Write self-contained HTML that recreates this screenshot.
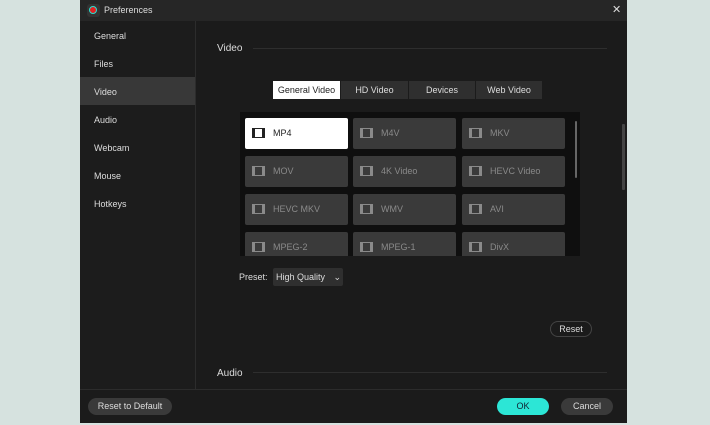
<!DOCTYPE html><html><head><style>
body{margin:0;width:710px;height:425px;background:#d6e2df;font-family:"Liberation Sans",sans-serif;font-size:9px;color:#ddd;position:relative;overflow:hidden}
.a{position:absolute}
.dlg{left:80px;top:0;width:547px;height:423px;background:#1b1b1b}
.title{left:80px;top:0;width:547px;height:21px;background:#262626}
.side{left:80px;top:21px;width:115px;height:368px;background:#1c1c1c;border-right:1px solid #2c2c2c}
.si{position:absolute;left:14px;color:#ddd}
.tab{position:absolute;top:81px;height:18px;line-height:18px;text-align:center;background:#2f2f2f;color:#ddd}
.cell{position:absolute;width:103px;height:31px;background:#3a3a3a;border-radius:2px;color:#8a8a8a;line-height:31px}
.cell span{position:absolute;left:28px}
.cell i{position:absolute;left:7px;top:10px;width:13px;height:10px;border:1.5px solid #8a8a8a;box-sizing:border-box;border-left-width:3px;border-right-width:3px}
.cell.on{background:#fff;color:#222}.cell.on i{border-color:#222}
.btn{position:absolute;border-radius:9px;text-align:center;color:#ddd}
</style></head><body>
<div class="a dlg"></div>
<div class="a title"></div>
<div class="a" style="left:87px;top:4px;width:13px;height:13px;border-radius:3px;background:#333"></div>
<div class="a" style="left:89px;top:6px;width:6px;height:6px;border-radius:50%;background:#e02020;border:1.5px solid #2ce0d0"></div>
<div class="a" style="left:104px;top:5px;color:#ddd">Preferences</div>
<div class="a" style="left:612px;top:3px;color:#ddd;font-size:11px">✕</div>
<div class="a side">
<div class="si" style="top:10px">General</div>
<div class="si" style="top:38px">Files</div>
<div class="a" style="left:0;top:56px;width:115px;height:28px;background:#383838"></div>
<div class="si" style="top:66px">Video</div>
<div class="si" style="top:94px">Audio</div>
<div class="si" style="top:122px">Webcam</div>
<div class="si" style="top:150px">Mouse</div>
<div class="si" style="top:178px">Hotkeys</div>
</div>
<div class="a" style="left:217px;top:43px;font-size:10px">Video</div>
<div class="a" style="left:253px;top:48px;width:354px;height:1px;background:#2e2e2e"></div>
<div class="tab" style="left:273px;width:67px;background:#fff;color:#222">General Video</div>
<div class="tab" style="left:341px;width:67px">HD Video</div>
<div class="tab" style="left:409px;width:66px">Devices</div>
<div class="tab" style="left:476px;width:66px">Web Video</div>
<div class="a" style="left:240px;top:112px;width:340px;height:144px;background:#0f0f0f;overflow:hidden">
<div class="cell on" style="left:5px;top:6px"><i></i><span>MP4</span></div>
<div class="cell" style="left:113px;top:6px"><i></i><span>M4V</span></div>
<div class="cell" style="left:222px;top:6px"><i></i><span>MKV</span></div>
<div class="cell" style="left:5px;top:44px"><i></i><span>MOV</span></div>
<div class="cell" style="left:113px;top:44px"><i></i><span>4K Video</span></div>
<div class="cell" style="left:222px;top:44px"><i></i><span>HEVC Video</span></div>
<div class="cell" style="left:5px;top:82px"><i></i><span>HEVC MKV</span></div>
<div class="cell" style="left:113px;top:82px"><i></i><span>WMV</span></div>
<div class="cell" style="left:222px;top:82px"><i></i><span>AVI</span></div>
<div class="cell" style="left:5px;top:120px"><i></i><span>MPEG-2</span></div>
<div class="cell" style="left:113px;top:120px"><i></i><span>MPEG-1</span></div>
<div class="cell" style="left:222px;top:120px"><i></i><span>DivX</span></div>
<div class="a" style="left:335px;top:9px;width:2px;height:57px;background:#666;border-radius:1px"></div>
</div>
<div class="a" style="left:622px;top:124px;width:3px;height:66px;background:#444;border-radius:1px"></div>
<div class="a" style="left:239px;top:272px">Preset:</div>
<div class="a" style="left:273px;top:268px;width:70px;height:18px;background:#2f2f2f;border-radius:2px;line-height:18px;padding-left:3px;box-sizing:border-box">High Quality <span style="margin-left:6px">⌄</span></div>
<div class="btn" style="left:550px;top:321px;width:40px;height:14px;line-height:14px;border:1px solid #444">Reset</div>
<div class="a" style="left:217px;top:368px;font-size:10px">Audio</div>
<div class="a" style="left:253px;top:372px;width:354px;height:1px;background:#2e2e2e"></div>
<div class="a" style="left:80px;top:389px;width:547px;height:1px;background:#2c2c2c"></div>
<div class="btn" style="left:88px;top:398px;width:84px;height:17px;line-height:17px;background:#3a3a3a">Reset to Default</div>
<div class="btn" style="left:497px;top:398px;width:52px;height:17px;line-height:17px;background:#2ce6d6;color:#123">OK</div>
<div class="btn" style="left:561px;top:398px;width:52px;height:17px;line-height:17px;background:#3a3a3a">Cancel</div>
</body></html>
